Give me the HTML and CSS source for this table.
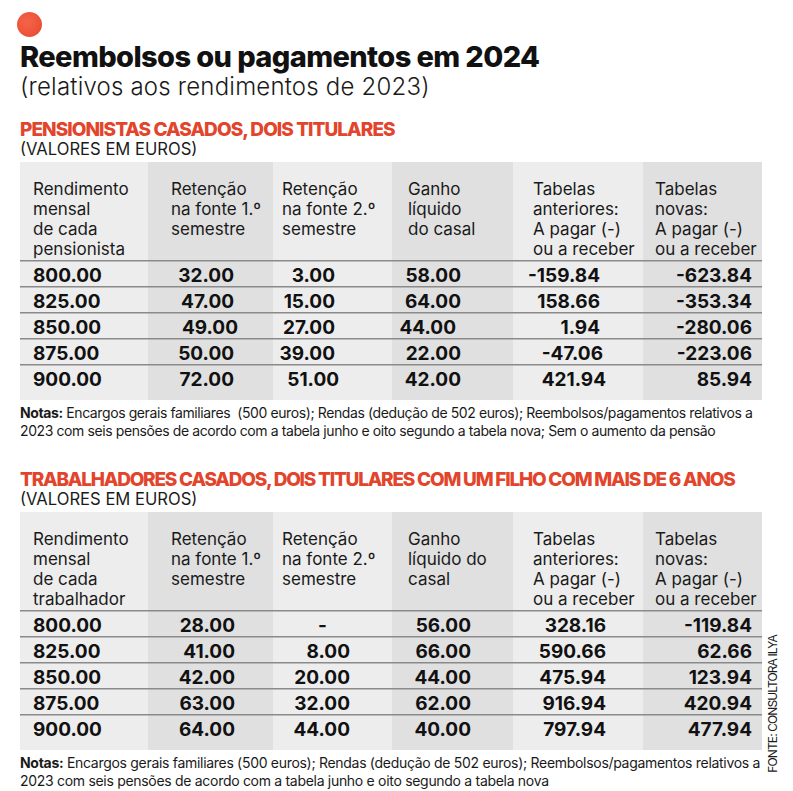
FILE: index.html
```html
<!DOCTYPE html>
<html lang="pt">
<head>
<meta charset="utf-8">
<title>Reembolsos ou pagamentos em 2024</title>
<link rel="stylesheet" href="styles.css">
</head>
<body>
<div class="page">
  <div class="dot"></div>
  <h1 class="title">Reembolsos ou pagamentos em 2024</h1>
  <p class="subtitle">(relativos aos rendimentos de 2023)</p>

  <h2 class="section">PENSIONISTAS CASADOS, DOIS TITULARES</h2>
  <p class="units">(VALORES EM EUROS)</p>
  <table class="data t1">
    <colgroup>
      <col class="c-light c1"><col class="c-dark c2"><col class="c-light c3"><col class="c-dark c4"><col class="c-light c5"><col class="c-dark c6">
    </colgroup>
    <thead>
      <tr>
        <th>Rendimento<br>mensal<br>de cada<br>pensionista</th>
        <th>Retenção<br>na fonte 1.º<br>semestre</th>
        <th>Retenção<br>na fonte 2.º<br>semestre</th>
        <th>Ganho<br>líquido<br>do casal</th>
        <th>Tabelas<br>anteriores:<br>A pagar (-)<br>ou a receber</th>
        <th>Tabelas<br>novas:<br>A pagar (-)<br>ou a receber</th>
      </tr>
    </thead>
    <tbody>
      <tr><td>800.00</td><td>32.00</td><td>3.00</td><td>58.00</td><td>-159.84</td><td>-623.84</td></tr>
      <tr><td>825.00</td><td>47.00</td><td>15.00</td><td>64.00</td><td>158.66</td><td>-353.34</td></tr>
      <tr><td>850.00</td><td class="nudge-r">49.00</td><td>27.00</td><td class="nudge-l">44.00</td><td>1.94</td><td>-280.06</td></tr>
      <tr><td>875.00</td><td>50.00</td><td>39.00</td><td>22.00</td><td class="nudge-r">-47.06</td><td>-223.06</td></tr>
      <tr><td>900.00</td><td>72.00</td><td class="nudge-r">51.00</td><td>42.00</td><td class="nudge-r2">421.94</td><td>85.94</td></tr>
    </tbody>
  </table>
  <p class="notes notes-1"><b>Notas:</b> Encargos gerais familiares &nbsp;(500 euros); Rendas (dedução de 502 euros); Reembolsos/pagamentos relativos a<br>2023 com seis pensões de acordo com a tabela junho e oito segundo a tabela nova; Sem o aumento da pensão</p>

  <h2 class="section section-long">TRABALHADORES CASADOS, DOIS TITULARES COM UM FILHO COM MAIS DE 6 ANOS</h2>
  <p class="units">(VALORES EM EUROS)</p>
  <table class="data t2">
    <colgroup>
      <col class="c-light c1"><col class="c-dark c2"><col class="c-light c3"><col class="c-dark c4"><col class="c-light c5"><col class="c-dark c6">
    </colgroup>
    <thead>
      <tr>
        <th>Rendimento<br>mensal<br>de cada<br>trabalhador</th>
        <th>Retenção<br>na fonte 1.º<br>semestre</th>
        <th>Retenção<br>na fonte 2.º<br>semestre</th>
        <th>Ganho<br>líquido do<br>casal</th>
        <th>Tabelas<br>anteriores:<br>A pagar (-)<br>ou a receber</th>
        <th>Tabelas<br>novas:<br>A pagar (-)<br>ou a receber</th>
      </tr>
    </thead>
    <tbody>
      <tr><td>800.00</td><td>28.00</td><td class="dash">-</td><td>56.00</td><td>328.16</td><td>-119.84</td></tr>
      <tr><td>825.00</td><td>41.00</td><td>8.00</td><td>66.00</td><td>590.66</td><td>62.66</td></tr>
      <tr><td>850.00</td><td>42.00</td><td>20.00</td><td>44.00</td><td>475.94</td><td>123.94</td></tr>
      <tr><td>875.00</td><td>63.00</td><td>32.00</td><td>62.00</td><td>916.94</td><td>420.94</td></tr>
      <tr><td>900.00</td><td>64.00</td><td>44.00</td><td>40.00</td><td>797.94</td><td>477.94</td></tr>
    </tbody>
  </table>
  <p class="notes notes-2"><b>Notas:</b> Encargos gerais familiares (500 euros); Rendas (dedução de 502 euros); Reembolsos/pagamentos relativos a<br>2023 com seis pensões de acordo com a tabela junho e oito segundo a tabela nova</p>

  <p class="source">FONTE: CONSULTORA ILYA</p>
</div>
</body>
</html>
```

FILE: styles.css
```css
* { box-sizing: border-box; }

html, body {
  margin: 0;
  padding: 0;
  background: #ffffff;
}

body {
  font-family: Inter, "Liberation Sans", sans-serif;
  color: #111111;
}

.page {
  position: relative;
  width: 793px;
  height: 791px;
  padding: 12px 0 0 20px;
  overflow: hidden;
}

.dot {
  width: 25px;
  height: 25px;
  margin-left: -3px;
  border-radius: 50%;
  background: radial-gradient(circle at 40% 40%, #f4654a, #e8462f);
}

.title {
  margin: 6px 0 0;
  font-size: 29px;
  line-height: 28px;
  font-weight: 800;
  letter-spacing: -0.6px;
  color: #111111;
}

.subtitle {
  margin: 5px 0 0;
  font-size: 24px;
  line-height: 22px;
  font-weight: 300;
  letter-spacing: 0.2px;
  color: #1a1a1a;
}

.section {
  margin: 22px 0 0;
  font-size: 19px;
  line-height: 20px;
  font-weight: 800;
  letter-spacing: -0.95px;
  color: #e2442c;
}

.section-long {
  letter-spacing: -1.22px;
}

.units {
  margin: 0;
  font-size: 16.6px;
  line-height: 18px;
  font-weight: 400;
  color: #1a1a1a;
}

.data {
  margin-top: 4px;
  border-collapse: collapse;
  table-layout: fixed;
  width: 742px;
}

.c-light { background: #ededed; }
.c-dark  { background: #e0e0e0; }

.c1 { width: 128px; }
.c2 { width: 125px; }
.c3 { width: 119px; }
.c4 { width: 121px; }
.c5 { width: 130px; }
.c6 { width: 119px; }

.data th {
  height: 98px;
  padding: 17px 0 0;
  vertical-align: top;
  text-align: left;
  font-size: 17px;
  line-height: 20px;
  font-weight: 400;
  color: #1a1a1a;
  white-space: nowrap;
}

.data th:nth-child(1) { padding-left: 13px; }
.data th:nth-child(2) { padding-left: 23px; }
.data th:nth-child(3) { padding-left: 9px; }
.data th:nth-child(4) { padding-left: 16px; }
.data th:nth-child(5) { padding-left: 20px; }
.data th:nth-child(6) { padding-left: 12px; }

.data td {
  height: 26px;
  padding: 6px 0 0;
  font-size: 19px;
  line-height: 20px;
  font-weight: 700;
  color: #111111;
  text-align: right;
  vertical-align: top;
  white-space: nowrap;
  box-shadow: inset 0 1.5px 0 #8a8a8a;
}

.data tbody tr:last-child td {
  height: 36px;
  padding-bottom: 10px;
}

.data td:nth-child(1) { text-align: left; padding-left: 13px; }

.t1 td:nth-child(2) { padding-right: 39px; }
.t1 td:nth-child(3) { padding-right: 57px; }
.t1 td:nth-child(4) { padding-right: 52px; }
.t1 td:nth-child(5) { padding-right: 43px; }
.t1 td:nth-child(6) { padding-right: 10px; }

.t1 td.nudge-r { padding-right: 35px; }
.t1 td:nth-child(3).nudge-r { padding-right: 53px; }
.t1 td:nth-child(4).nudge-l { padding-right: 57px; }
.t1 td:nth-child(5).nudge-r { padding-right: 40px; }
.t1 td:nth-child(5).nudge-r2 { padding-right: 37px; }

.t2 td:nth-child(2) { padding-right: 38px; }
.t2 td:nth-child(3) { padding-right: 42px; }
.t2 td:nth-child(4) { padding-right: 42px; }
.t2 td:nth-child(5) { padding-right: 37px; }
.t2 td:nth-child(6) { padding-right: 10px; }

.t2 td.dash { padding-right: 65px; }

.notes {
  margin: 4px 0 0;
  font-size: 14px;
  line-height: 18px;
  font-weight: 400;
  color: #1a1a1a;
  white-space: nowrap;
}

.notes-1 { letter-spacing: -0.4px; }
.notes-2 { letter-spacing: -0.3px; }

.notes b { font-weight: 700; }

.notes + .section { margin-top: 30px; }

.source {
  position: absolute;
  left: 766px;
  top: 635px;
  margin: 0;
  writing-mode: vertical-rl;
  transform: rotate(180deg);
  font-size: 12px;
  line-height: 14px;
  letter-spacing: -0.9px;
  color: #1a1a1a;
  white-space: nowrap;
}
```
